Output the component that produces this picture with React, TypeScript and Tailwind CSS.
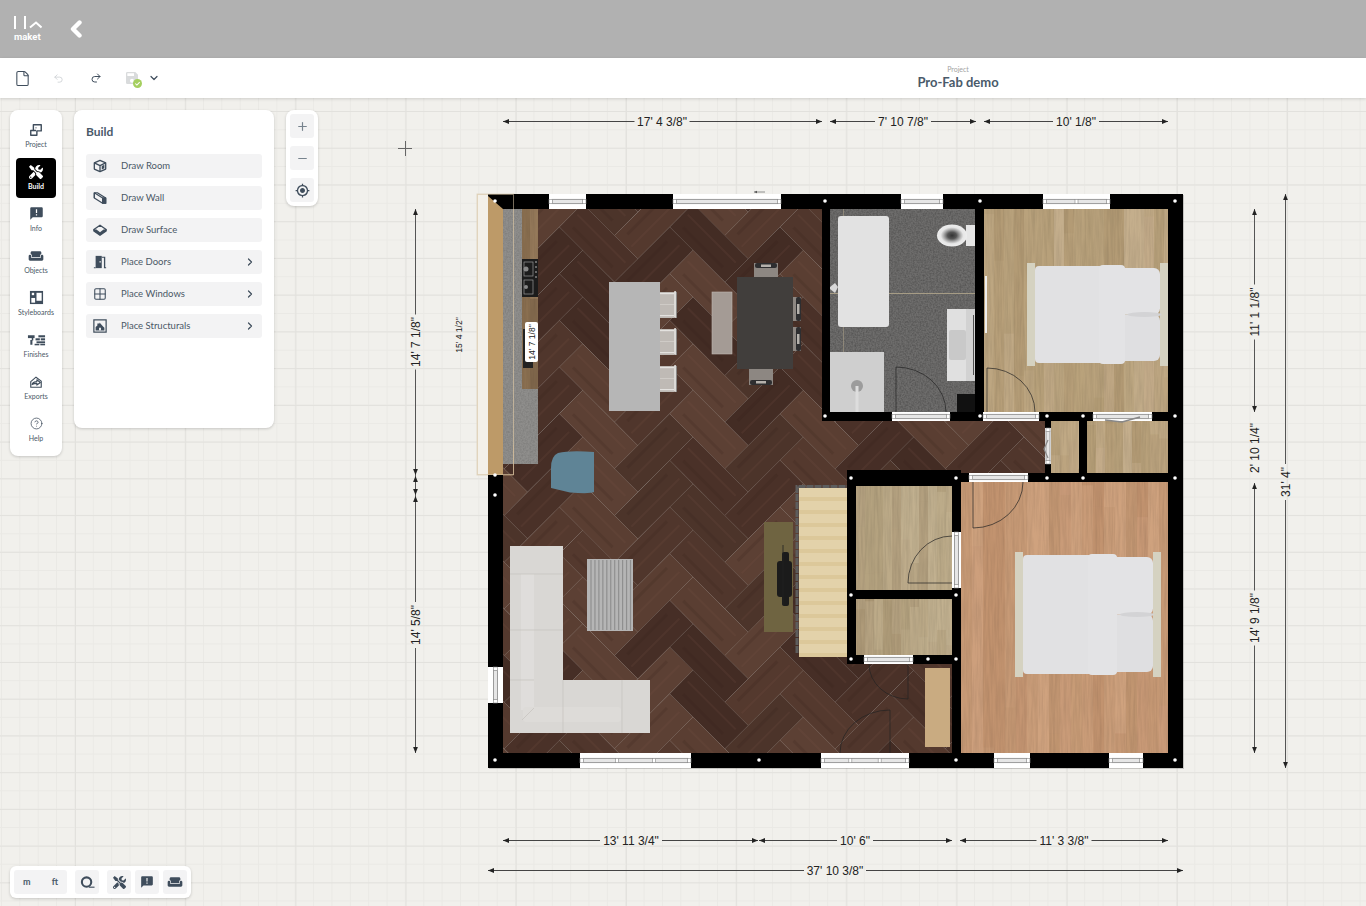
import React from "react";
import { ChevronRight, ChevronDown, Undo2, Redo2, File, Plus, Minus, CircleHelp, Grid2x2 } from "lucide-react";
import { FaTools } from "react-icons/fa";
import { MdWeekend, MdAnnouncement, MdMyLocation, MdSave } from "react-icons/md";

const ink = "#3f4d5c";

function rng(seed: number) {
  let s = seed;
  return () => {
    s = (s * 16807) % 2147483647;
    return s / 2147483647;
  };
}

const W = 33;
const L = 78;
const OX = 693;
const OY = 577;

function Herringbone() {
  const r = rng(4217);
  const pal = ["#4c342a", "#54392e", "#4a3128", "#5a3e32", "#462e26", "#5c4034", "#50362c", "#432c24"];
  const rot = (x: number, y: number) => [OX + (x - y) / Math.SQRT2, OY + (x + y) / Math.SQRT2];
  const poly = (pts: number[][]) => pts.map((p) => rot(p[0], p[1]).map((n) => n.toFixed(1)).join(",")).join(" ");
  const items: React.ReactNode[] = [];
  for (let j = -7; j <= 7; j++) {
    for (let i = -20; i <= 20; i++) {
      const ox = i * W + j * L;
      const oy = i * W - j * L;
      const c = rot(ox, oy);
      if (c[0] < 300 || c[0] > 1300 || c[1] < 60 || c[1] > 900) continue;
      const h = [[ox, oy], [ox + L, oy], [ox + L, oy + W], [ox, oy + W]];
      const v = [[ox + L, oy + W - L], [ox + L + W, oy + W - L], [ox + L + W, oy + W], [ox + L, oy + W]];
      const shapes = [h, v];
      shapes.forEach((sh, k) => {
        const col = pal[Math.floor(r() * pal.length)];
        items.push(<polygon key={`${i}-${j}-${k}`} points={poly(sh)} fill={col} />);
        const a = k === 0 ? [[ox + 4, oy + W * 0.35], [ox + L - 6, oy + W * 0.35]] : [[ox + L + W * 0.6, oy + W - L + 6], [ox + L + W * 0.6, oy + W - 4]];
        const b = k === 0 ? [[ox + 10, oy + W * 0.72], [ox + L - 12, oy + W * 0.72]] : [[ox + L + W * 0.25, oy + W - L + 12], [ox + L + W * 0.25, oy + W - 10]];
        [a, b].forEach((ln, m) => {
          const p1 = rot(ln[0][0], ln[0][1]);
          const p2 = rot(ln[1][0], ln[1][1]);
          items.push(<line key={`${i}-${j}-${k}-${m}`} x1={p1[0]} y1={p1[1]} x2={p2[0]} y2={p2[1]} stroke={m ? "#2f1e18" : "#7a5a4b"} strokeOpacity={0.16} strokeWidth={m ? 3 : 2} />);
        });
      });
    }
  }
  return <g clipPath="url(#planClip)">{items}</g>;
}

function Planks({ x, y, w, h, colors, seed, pw = 9, id }: { x: number; y: number; w: number; h: number; colors: string[]; seed: number; pw?: number; id: string }) {
  const r = rng(seed);
  const bars: React.ReactNode[] = [];
  for (let px = x, i = 0; px < x + w; px += pw, i++) {
    const nw = Math.min(pw, x + w - px);
    bars.push(<rect key={`a${i}`} x={px} y={y} width={nw} height={h} fill={colors[Math.floor(r() * colors.length)]} />);
    const split = y + r() * h;
    bars.push(<rect key={`b${i}`} x={px} y={split} width={nw} height={y + h - split} fill={colors[Math.floor(r() * colors.length)]} opacity={0.6} />);
  }
  return (
    <g>
      {bars}
      <rect x={x} y={y} width={w} height={h} filter="url(#grain)" opacity={0.09} fill="#000" data-id={id} />
    </g>
  );
}

function HWin({ x1, x2, y, h = 15, split = 0 }: { x1: number; x2: number; y: number; h?: number; split?: number }) {
  const m = y + h / 2;
  const cuts = [];
  for (let i = 1; i <= split; i++) cuts.push(x1 + ((x2 - x1) * i) / (split + 1));
  return (
    <g>
      <rect x={x1} y={y} width={x2 - x1} height={h} fill="#fff" />
      <rect x={x1 + 3} y={m - 2.2} width={x2 - x1 - 6} height={4.4} fill="#e6e6e6" stroke="#777" strokeWidth={0.7} />
      <rect x={x1} y={m - 2.2} width={3.5} height={4.4} fill="#fff" stroke="#888" strokeWidth={0.6} />
      <rect x={x2 - 3.5} y={m - 2.2} width={3.5} height={4.4} fill="#fff" stroke="#888" strokeWidth={0.6} />
      {cuts.map((c) => (
        <rect key={c} x={c - 1.5} y={m - 2.2} width={3} height={4.4} fill="#fff" stroke="#888" strokeWidth={0.6} />
      ))}
    </g>
  );
}

function VWin({ y1, y2, x, w }: { y1: number; y2: number; x: number; w: number }) {
  const m = x + w / 2;
  return (
    <g>
      <rect x={x} y={y1} width={w} height={y2 - y1} fill="#fff" />
      <rect x={m - 2} y={y1 + 3} width={4} height={y2 - y1 - 6} fill="#e6e6e6" stroke="#777" strokeWidth={0.7} />
      <rect x={m - 2} y={y1} width={4} height={3.5} fill="#fff" stroke="#888" strokeWidth={0.6} />
      <rect x={m - 2} y={y2 - 3.5} width={4} height={3.5} fill="#fff" stroke="#888" strokeWidth={0.6} />
    </g>
  );
}

function Bed({ x, y, w, h, fold, foldEnd, pillow }: { x: number; y: number; w: number; h: number; fold: number; foldEnd: number; pillow: number }) {
  const my = y + h / 2;
  const top = y + 3;
  const bottom = y + h - 3;
  return (
    <g>
      <rect x={x} y={y} width={8} height={h} fill="#d5d2c1" />
      <rect x={x + w - 8} y={y} width={8} height={h} fill="#d5d2c1" />
      <rect x={foldEnd - 6} y={top + 2} width={x + w - 8 - foldEnd + 6} height={my - top - 2} rx={6} fill="#e3e3e5" />
      <rect x={foldEnd - 6} y={my} width={x + w - 8 - foldEnd + 6} height={bottom - my - 2} rx={6} fill="#dfdfe1" />
      <ellipse cx={(foldEnd + pillow) / 2 + 2} cy={my} rx={17} ry={2.5} fill="#d3d3d5" />
      <rect x={x + 8} y={top} width={foldEnd - x - 8} height={bottom - top} rx={4} fill="#e1e1e3" />
      <rect x={fold} y={top - 1} width={foldEnd - fold} height={bottom - top + 2} rx={4} fill="#e3e3e5" />
    </g>
  );
}

function Arrow({ x, y, dir }: { x: number; y: number; dir: "l" | "r" | "u" | "d" }) {
  const s = 6;
  const t = 2.4;
  const pts =
    dir === "l" ? `${x},${y} ${x + s},${y - t} ${x + s},${y + t}` :
    dir === "r" ? `${x},${y} ${x - s},${y - t} ${x - s},${y + t}` :
    dir === "u" ? `${x},${y} ${x - t},${y + s} ${x + t},${y + s}` :
    `${x},${y} ${x - t},${y - s} ${x + t},${y - s}`;
  return <polygon points={pts} fill="#222" />;
}

function HDim({ x1, x2, y, cx, label, tw }: { x1: number; x2: number; y: number; cx: number; label: string; tw: number }) {
  return (
    <g>
      <line x1={x1} y1={y + 0.5} x2={cx - tw / 2 - 3} y2={y + 0.5} stroke="#444" strokeWidth={1} />
      <line x1={cx + tw / 2 + 3} y1={y + 0.5} x2={x2} y2={y + 0.5} stroke="#444" strokeWidth={1} />
      <Arrow x={x1} y={y + 0.5} dir="l" />
      <Arrow x={x2} y={y + 0.5} dir="r" />
      <text x={cx} y={y + 4.5} textAnchor="middle" fontSize={12} fill="#222" fontFamily="'Liberation Sans',sans-serif">{label}</text>
    </g>
  );
}

function VDim({ x, y1, y2, cy, label, tw, noLine }: { x: number; y1: number; y2: number; cy: number; label: string; tw: number; noLine?: boolean }) {
  return (
    <g>
      {!noLine && <line x1={x + 0.5} y1={y1} x2={x + 0.5} y2={cy - tw / 2 - 3} stroke="#555" strokeWidth={1} />}
      {!noLine && <line x1={x + 0.5} y1={cy + tw / 2 + 3} x2={x + 0.5} y2={y2} stroke="#555" strokeWidth={1} />}
      {!noLine && <Arrow x={x + 0.5} y={y1} dir="u" />}
      {!noLine && <Arrow x={x + 0.5} y={y2} dir="d" />}
      <text transform={`translate(${x + 4.5} ${cy}) rotate(-90)`} textAnchor="middle" fontSize={12} fill="#222" fontFamily="'Liberation Sans',sans-serif">{label}</text>
    </g>
  );
}

function Chair({ x, y, w, h, dir }: { x: number; y: number; w: number; h: number; dir: "u" | "d" | "r" }) {
  const isV = dir === "u" || dir === "d";
  return (
    <g>
      <rect x={x} y={y} width={w} height={h} fill="#8d8782" />
      {dir === "u" && <rect x={x + 1} y={y} width={w - 2} height={5} rx={2} fill="#2e2e30" />}
      {dir === "d" && <rect x={x + 1} y={y + h - 5} width={w - 2} height={5} rx={2} fill="#2e2e30" />}
      {dir === "r" && <rect x={x + w - 5} y={y} width={5} height={h} rx={2} fill="#2e2e30" />}
      {isV ? (
        <rect x={x + w / 2 - 5} y={dir === "u" ? y + 1.5 : y + h - 4} width={10} height={2.5} fill="#b5b1ac" />
      ) : (
        <rect x={x + w - 4} y={y + h / 2 - 5} width={2.5} height={10} fill="#b5b1ac" />
      )}
    </g>
  );
}

function Stool({ y }: { y: number }) {
  return (
    <g>
      <rect x={660} y={y} width={14} height={26} fill="#bfbab5" />
      <rect x={660} y={y + 1} width={16} height={1.2} fill="#e4e2df" />
      <rect x={660} y={y + 23} width={16} height={1.2} fill="#e4e2df" />
      <rect x={660} y={y + 12} width={14} height={1} fill="#cfcbc6" />
      <rect x={674} y={y - 1} width={2.2} height={27} rx={1} fill="#dcdad7" />
      <rect x={676} y={y} width={1} height={26} fill="#8a8886" />
    </g>
  );
}

function Plan() {
  const dots: [number, number][] = [
    [495, 201], [495, 475], [495, 495], [495, 760], [759, 760], [825, 201], [980, 201], [1175, 201], [825, 416], [980, 416],
    [1047, 416], [1083, 416], [1175, 416], [851, 478], [956, 478], [1047, 478], [1083, 478], [1175, 478], [851, 595], [956, 595],
    [851, 659], [928, 659], [956, 659], [956, 760], [1175, 760],
  ];
  const treads: number[] = [];
  for (let i = 0; i < 13; i++) treads.push(488 + i * 13);
  const rugs: number[] = [];
  for (let i = 0; i < 11; i++) rugs.push(591 + i * 3.95);
  const tan = ["#b9a27c", "#c0a985", "#b39b75", "#c4ae8c", "#b7a07a"];
  const tan2 = ["#b3a07f", "#bcaa88", "#ab9775", "#c1b08f", "#b4a27f"];
  const orange = ["#c79a76", "#cfa27e", "#c2936f", "#cc9d7b", "#c29672"];
  return (
    <svg className="absolute left-0 top-0 w-[1366px] h-[808px]" viewBox="0 98 1366 808">
      <defs>
        <clipPath id="planClip">
          <rect x={488} y={194} width={695} height={574} />
        </clipPath>
        <filter id="grain" x="0" y="0" width="100%" height="100%">
          <feTurbulence type="fractalNoise" baseFrequency="0.45 0.025" numOctaves="3" seed="7" />
          <feColorMatrix values="0 0 0 0 0  0 0 0 0 0  0 0 0 0 0  1.6 0 0 0 -0.5" />
        </filter>
        <filter id="speck" x="0" y="0" width="100%" height="100%">
          <feTurbulence type="fractalNoise" baseFrequency="0.6" numOctaves="3" seed="3" />
          <feColorMatrix values="0 0 0 0 0  0 0 0 0 0  0 0 0 0 0  2 0 0 0 -0.65" />
        </filter>
        <radialGradient id="bowl">
          <stop offset="0" stopColor="#333" />
          <stop offset="0.3" stopColor="#555" />
          <stop offset="0.55" stopColor="#aaa" />
          <stop offset="0.75" stopColor="#e6e6e6" />
          <stop offset="1" stopColor="#eee" />
        </radialGradient>
      </defs>

      <HDim x1={503} x2={822} y={121} cx={662} label={"17' 4 3/8\""} tw={49} />
      <HDim x1={830} x2={976} y={121} cx={903} label={"7' 10 7/8\""} tw={50} />
      <HDim x1={984} x2={1168} y={121} cx={1076} label={"10' 1/8\""} tw={40} />
      <HDim x1={503} x2={758} y={840} cx={631} label={"13' 11 3/4\""} tw={56} />
      <HDim x1={759} x2={952} y={840} cx={855} label={"10' 6\""} tw={30} />
      <HDim x1={960} x2={1168} y={840} cx={1064} label={"11' 3 3/8\""} tw={49} />
      <HDim x1={488} x2={1183} y={870} cx={835} label={"37' 10 3/8\""} tw={56} />
      <VDim x={415} y1={209} y2={475} cy={342} label={"14' 7 1/8\""} tw={49} />
      <VDim x={415} y1={496} y2={753} cy={625} label={"14' 5/8\""} tw={40} />
      <line x1={415.5} y1={475} x2={415.5} y2={496} stroke="#555" strokeWidth={1} />
      <Arrow x={415.5} y={476} dir="u" />
      <Arrow x={415.5} y={495} dir="d" />
      <VDim x={1254} y1={209} y2={412} cy={312} label={"11' 1 1/8\""} tw={49} />
      <VDim x={1254} y1={412} y2={472} cy={448} label={"2' 10 1/4\""} tw={50} noLine />
      <VDim x={1254} y1={483} y2={753} cy={618} label={"14' 9 1/8\""} tw={49} />
      <VDim x={1285} y1={194} y2={768} cy={482} label={"31' 4\""} tw={30} />
      <text transform="translate(462 335) rotate(-90)" textAnchor="middle" fontSize={8.5} fill="#222" fontFamily="'Liberation Sans',sans-serif">{"15' 4 1/2\""}</text>

      <path d="M398 148.5H412M405.500 141V156" stroke="#666" strokeWidth={1} />

      <rect x={489} y={195} width={695} height={574} fill="#000" opacity={0.18} />
      <rect x={477} y={194} width={37} height={281} fill="#f3f0e9" stroke="#e2d8c5" strokeWidth={1} />

      <Herringbone />

      <rect x={830} y={209} width={145} height={203} fill="#6e6d6c" />
      <rect x={830} y={209} width={145} height={203} filter="url(#speck)" opacity={0.2} />
      <rect x={830} y={293} width={145} height={1} fill="#a69c85" />
      <rect x={843} y={209} width={1} height={143} fill="#a69c85" opacity={0.6} />
      <Planks x={984} y={209} w={184} h={203} colors={tan} seed={23} pw={10} id="c" />
      <Planks x={1051} y={421} w={28} h={52} colors={tan} seed={5} id="d" />
      <Planks x={1087} y={421} w={81} h={52} colors={tan} seed={31} id="e" />
      <Planks x={856} y={486} w={96} h={104} colors={tan2} seed={41} id="f" />
      <Planks x={856} y={599} w={96} h={56} colors={tan2} seed={47} id="g" />
      <Planks x={961} y={482} w={207} h={271} colors={orange} seed={53} pw={11} id="h" />

      {/* kitchen */}
      <rect x={503} y={209} width={19} height={255} fill="#8f8e8c" />
      <rect x={503} y={209} width={19} height={255} filter="url(#speck)" opacity={0.1} />
      <Planks x={522} y={209} w={16} h={180} colors={["#8a6f50", "#7a6146", "#95795a"]} seed={61} pw={8} id="i" />
      <rect x={522} y={389} width={16} height={75} fill="#8f8e8c" />
      <rect x={522} y={389} width={16} height={75} filter="url(#speck)" opacity={0.1} />
      <rect x={522} y={259} width={16} height={38} fill="#1c1c1c" />
      <rect x={524} y={262} width={9} height={14} fill="none" stroke="#999" strokeWidth={0.7} />
      <rect x={524} y={280} width={9} height={14} fill="none" stroke="#999" strokeWidth={0.7} />
      <circle cx={526} cy={269} r={2.5} fill="#888" />
      <circle cx={526} cy={287} r={2} fill="#888" />
      <circle cx={536} cy={262} r={0.8} fill="#ccc" />
      <circle cx={536} cy={267} r={0.8} fill="#ccc" />
      <circle cx={536} cy={272} r={0.8} fill="#ccc" />
      <circle cx={536} cy={277} r={0.8} fill="#ccc" />
      <rect x={523} y={329} width={10} height={39} fill="#222" />
      <rect x={525} y={322} width={13} height={40} rx={2} fill="#fff" />
      <text transform="translate(534.500 342) rotate(-90)" textAnchor="middle" fontSize={8.500} fill="#222" fontFamily="'Liberation Sans',sans-serif">{"14' 7 1/8\""}</text>
      <path d="M513.500 445V475H503" stroke="#c9a880" strokeWidth={1} fill="none" opacity={0.7} />
      <line x1={513.500} y1={209} x2={513.500} y2={464} stroke="#bda98c" strokeWidth={0.8} opacity={0.6} />

      {/* island and dining */}
      <rect x={609} y={282} width={51} height={129} fill="#b6b6b6" />
      <Stool y={292} />
      <Stool y={329} />
      <Stool y={366} />
      <rect x={712} y={292} width={20} height={62} fill="#a49b95" stroke="#c0b9b3" strokeWidth={0.6} />
      <Chair x={754} y={263} w={24} h={14} dir="u" />
      <Chair x={749} y={369} w={24} h={16} dir="d" />
      <Chair x={793} y={297} w={8} h={24} dir="r" />
      <Chair x={793} y={327} w={8} h={24} dir="r" />
      <rect x={737} y={277} width={56} height={92} fill="#413e3c" />

      {/* blue chair */}
      <path d="M558 453Q551 456 551 468V488L570 492.500Q590 494 594 492V452Q570 450 558 453Z" fill="#5f8496" />

      {/* sofa */}
      <path d="M510 546H563V680H650V733H510Z" fill="#d9d7d4" />
      <rect x={521} y={574} width={13} height={136} fill="#dfdddb" />
      <rect x={523} y={707} width={98} height={15} rx={3} fill="#dddbd8" />
      <path d="M510 574H563M510 630H563M510 680H534M563 680V733M622 680V733M534 708L522 720" stroke="#c4c1bd" strokeWidth={0.7} fill="none" />

      {/* rug */}
      <rect x={587} y={559} width={46} height={72} fill="#b5b5b5" />
      {rugs.map((x) => (
        <line key={x} x1={x} y1={560} x2={x} y2={630} stroke="#8f8f8f" strokeWidth={1.2} />
      ))}

      {/* tv */}
      <rect x={764} y={522} width={29} height={110} fill="#6f6441" />
      <rect x={777} y={561} width={15} height={36} rx={3} fill="#1b1b1b" />
      <rect x={782} y={552} width={7} height={54} rx={2} fill="#1b1b1b" />
      <line x1={783} y1={545} x2={783} y2={605} stroke="#222" strokeWidth={0.8} />

      {/* stairs */}
      <rect x={799} y={488} width={48} height={169} fill="#e3d2aa" />
      {treads.map((y) => (
        <rect key={y} x={799} y={y + 9} width={48} height={4} fill="#dcc89a" />
      ))}
      <path d="M797 653V486.500H847" stroke="#5d5d5d" strokeWidth={3} fill="none" strokeDasharray="7 1" />

      {/* console */}
      <rect x={925} y={668} width={25} height={79} fill="#c9ab81" />

      {/* beds */}
      <Bed x={1027} y={263} w={141} h={103} fold={1099} foldEnd={1125} pillow={1160} />
      <Bed x={1015} y={552} w={146} h={125} fold={1088} foldEnd={1117} pillow={1153} />

      {/* bath */}
      <rect x={838} y={216} width={51} height={111} rx={3} fill="#e2e2e2" />
      <path d="M830 287L835 283V293L830 289Z M835 283L838 287L835 293Z" fill="#d8d8d8" />
      <rect x={830} y={352} width={54} height={60} fill="#cfcfcf" />
      <circle cx={857} cy={386} r={6} fill="#9c9c9c" />
      <rect x={855.500} y={386} width={3} height={26} fill="#ddd" />
      <rect x={947} y={309} width={28} height={72} fill="#e0e0e0" />
      <rect x={949} y={330} width={17} height={30} rx={2} fill="#c9c9c9" />
      <line x1={973.500} y1={315} x2={973.500} y2={375} stroke="#555" strokeWidth={1} />
      <rect x={966} y={309} width={9} height={72} fill="#000" opacity={0.06} />
      <rect x={957} y={394} width={18} height={18} fill="#111" />
      <rect x={966} y={225} width={9} height={21} fill="#e6e6e6" />
      <ellipse cx={952} cy={235.500} rx={15} ry={11} fill="url(#bowl)" />
      <rect x={985} y={276} width={2} height={57} fill="#eee" />

      {/* walls */}
      <g fill="#000">
        <rect x={488} y={194} width={695} height={15} />
        <rect x={1168} y={194} width={15} height={574} />
        <rect x={488} y={753} width={695} height={15} />
        <rect x={488} y={475} width={15} height={293} />
        <rect x={822} y={194} width={8} height={227} />
        <rect x={975} y={194} width={9} height={227} />
        <rect x={822} y={412} width={223} height={9} />
        <rect x={1045} y={412} width={123} height={9} />
        <rect x={1045} y={412} width={6} height={70} />
        <rect x={1079} y={412} width={8} height={70} />
        <rect x={956} y={473} width={227} height={9} />
        <rect x={847} y={470} width={109} height={16} />
        <rect x={847} y={470} width={9} height={194} />
        <rect x={952} y={470} width={9} height={298} />
        <rect x={847} y={590} width={114} height={9} />
        <rect x={847} y={655} width={114} height={9} />
      </g>
      <polygon points="488,196 503,209 503,475 488,475" fill="#bd9a68" />
      <rect x={477.500} y={194.500} width={36} height={280} fill="none" stroke="#d8c7a8" strokeWidth={1} opacity={0.55} />

      <HWin x1={549} x2={586} y={194} />
      <HWin x1={673} x2={781} y={194} />
      <HWin x1={901} x2={943} y={194} />
      <HWin x1={1043} x2={1110} y={194} split={1} />
      <HWin x1={892} x2={950} y={412} h={9} />
      <HWin x1={983} x2={1039} y={412} h={9} />
      <HWin x1={1093} x2={1152} y={412} h={9} />
      <HWin x1={969} x2={1028} y={473} h={9} />
      <HWin x1={864} x2={913} y={655} h={9} />
      <HWin x1={580} x2={691} y={753} split={2} />
      <HWin x1={821} x2={909} y={753} split={2} />
      <HWin x1={994} x2={1030} y={753} />
      <HWin x1={1109} x2={1143} y={753} />
      <VWin x={488} w={15} y1={667} y2={703} />
      <VWin x={952} w={9} y1={532} y2={588} />
      <VWin x={1045} w={6} y1={428} y2={464} />

      <g stroke="#222" strokeWidth={0.7} fill="none">
        <path d="M896 412V367A50 45 0 0 1 946 412" />
        <path d="M987 412V368A48 44 0 0 1 1035 412" />
        <path d="M973 482V528A50 46 0 0 0 1023 482" />
        <path d="M952 583H908A44 47 0 0 1 952 536" />
        <path d="M908 664V699A39 35 0 0 1 869 664" />
        <path d="M890 753V710A50 43 0 0 0 840 753" />
        <path d="M1105 420L1122 422L1140 417" stroke="#888" strokeWidth={1.500} />
        <path d="M1048 440L1044 449L1048 458" stroke="#888" strokeWidth={1.200} />
      </g>

      {dots.map(([x, y]) => (
        <circle key={`${x}-${y}`} cx={x} cy={y} r={1.800} fill="#fff" />
      ))}
      <path d="M754 192H765" stroke="#777" strokeWidth={0.8} />
      <polygon points="754,192 757,190.700 757,193.300" fill="#555" />
    </svg>
  );
}

function Ic({ children }: { children: React.ReactNode }) {
  return (
    <svg viewBox="0 0 16 16" width={14} height={14} fill="none" stroke={ink} strokeWidth={1.600} strokeLinejoin="round">
      {children}
    </svg>
  );
}

const ProjectIcon = () => (
  <Ic>
    <path d="M5 2H14V9H9V14H2V8.500H5Z" />
    <path d="M5 8.500H8M8 5V6" />
  </Ic>
);
const StyleIcon = () => (
  <svg viewBox="0 0 16 16" width={15} height={15}>
    <rect x={1} y={1} width={14} height={14} fill={ink} />
    <rect x={2.500} y={8.500} width={4} height={5} fill="#fff" />
    <rect x={8} y={3} width={5.500} height={8.500} fill="#fff" />
    <rect x={3} y={3} width={2.500} height={2.500} fill="#fff" />
  </svg>
);
const FinishIcon = () => (
  <svg viewBox="0 0 20 12" width={19} height={12} fill={ink}>
    <rect x={1} y={1} width={7} height={3} />
    <rect x={5} y={3.500} width={1.600} height={3} />
    <rect x={3.500} y={6} width={2.200} height={5} />
    <rect x={12} y={1} width={7} height={2.200} />
    <rect x={9} y={4.200} width={4.500} height={2.200} />
    <rect x={14.500} y={4.200} width={4.500} height={2.200} />
    <rect x={10} y={7.400} width={9} height={2} />
    <rect x={8} y={10} width={5} height={1.600} />
    <rect x={14} y={10} width={5} height={1.600} />
  </svg>
);
const ExportIcon = () => (
  <svg viewBox="0 0 16 16" width={14} height={14} fill="none" stroke={ink} strokeWidth={1.300} strokeLinejoin="round">
    <path d="M2 7.500L8 2.500L14 7L14 14H2Z" />
    <path d="M3.500 11C4 8.500 6.500 7.500 9 7.500V5.500L13 8.500L9 11.500V9.500C7 9.500 5 10 3.500 11Z" fill="#fff" />
  </svg>
);
const RoomIcon = () => (
  <svg viewBox="0 0 16 16" width={14} height={14} fill="none" stroke={ink} strokeWidth={1.500} strokeLinejoin="round">
    <path d="M8 1.500L14.500 4.500V11.500L8 14.500L1.500 11.500V4.500Z" />
    <path d="M1.500 4.500L8 7.500L14.500 4.500M8 7.500V14.500" />
    <path d="M10 8L13 6.500V10.500L10 12Z" fill={ink} stroke="none" />
  </svg>
);
const WallIcon = () => (
  <svg viewBox="0 0 16 16" width={14} height={14} fill="none" stroke={ink} strokeWidth={1.400} strokeLinejoin="round">
    <path d="M1.500 2H5L14.500 8V14H11L1.500 8Z" />
    <path d="M1.500 2V8M11 8V14M1.500 2L11 8H14.500" />
    <path d="M11 8L14.500 8V14H11Z" fill={ink} />
  </svg>
);
const SurfaceIcon = () => (
  <svg viewBox="0 0 16 16" width={14} height={14} fill="none" stroke={ink} strokeWidth={1.500} strokeLinejoin="round">
    <path d="M8 2.500L15 7.500L8 12.500L1 7.500Z" />
    <path d="M1 7.500V9L8 14L15 9V7.500" fill={ink} />
    <path d="M8 4.500L12 7.500L8 10.500L4 7.500Z" fill="#f3f3f4" stroke="none" />
  </svg>
);
const DoorIcon = () => (
  <svg viewBox="0 0 16 16" width={14} height={14} fill={ink}>
    <path d="M3 1H10V15H3Z" />
    <path d="M10 2H14V14H15V15H1V14H3V15H12.500V3H10Z" />
    <rect x={7.500} y={7} width={1.300} height={1.600} fill="#fff" />
  </svg>
);
const StructIcon = () => (
  <svg viewBox="0 0 16 16" width={14} height={14} fill="none">
    <rect x={1} y={1} width={14} height={14} stroke={ink} strokeWidth={1.400} />
    <path d="M3 13V9L5 7.500V5H7.500V4L11 8L13 10V13Z" fill={ink} />
    <rect x={7} y={10} width={2} height={3} fill="#fff" />
  </svg>
);
const MeasureIcon = () => (
  <svg viewBox="0 0 16 16" width={15} height={15} fill="none" stroke={ink} strokeWidth={2.200}>
    <circle cx={7} cy={7.500} r={5} />
    <path d="M9.500 13H15.500" strokeWidth={1.200} />
  </svg>
);

function NavItem({ label, icon, active }: { label: string; icon: React.ReactNode; active?: boolean }) {
  return (
    <div className={`relative flex h-10 flex-col items-center rounded-[4px] ${active ? "bg-black text-white" : "text-[#4a5866]"}`}>
      <div className="mt-[6px] flex h-[15px] items-center justify-center">{icon}</div>
      <div className={`mt-[3px] text-[7px] leading-[8px] ${active ? "font-bold" : ""}`}>{label}</div>
    </div>
  );
}

function MenuItem({ label, icon, more }: { label: string; icon: React.ReactNode; more?: boolean }) {
  return (
    <div className="flex h-6 items-center rounded-[3px] bg-[#f3f3f4] pl-[7px] pr-[6px] text-[9.5px] text-[#4a5866]">
      <div className="flex w-[14px] items-center justify-center">{icon}</div>
      <span className="ml-[14px]">{label}</span>
      {more && <ChevronRight className="ml-auto" size={12} color={ink} strokeWidth={2.400} />}
    </div>
  );
}

function ZoomBtn({ children }: { children: React.ReactNode }) {
  return <div className="flex h-6 w-6 items-center justify-center rounded-[3px] bg-[#f3f3f4]">{children}</div>;
}

function BarBtn({ children }: { children: React.ReactNode }) {
  return <div className="flex h-6 w-6 items-center justify-center rounded-[3px] bg-[#f3f3f4]">{children}</div>;
}

export default function App() {
  return (
    <div className="flex h-[906px] w-[1366px] flex-col overflow-hidden font-['Lato',sans-serif]">
      <header className="flex h-[58px] shrink-0 items-center bg-[#b1b1b1] pl-[14px]">
        <div className="flex w-[28px] flex-col">
          <svg viewBox="0 0 28 14" width={28} height={14} fill="#fff">
            <rect x={0} y={0} width={2} height={13} />
            <rect x={10} y={0} width={2} height={13} />
            <path d="M16 11.500L22 6.500L27.500 11.500" fill="none" stroke="#fff" strokeWidth={2} />
          </svg>
          <span className="mt-[2px] font-['Roboto',sans-serif] text-[9.5px] font-bold leading-[10px] text-white">maket</span>
        </div>
        <svg className="ml-[28px]" viewBox="0 0 12 18" width={12} height={18}>
          <path d="M9.500 2.500L3 9L9.500 15.500" fill="none" stroke="#fff" strokeWidth={4.400} strokeLinecap="round" strokeLinejoin="round" />
        </svg>
      </header>

      <div className="relative z-10 flex h-10 shrink-0 items-center bg-white pl-[14px] shadow-[0_1px_3px_rgba(0,0,0,0.15)]">
        <File size={17} color={ink} strokeWidth={1.500} />
        <Undo2 className="ml-[22px]" size={11} color="#c5c9cd" strokeWidth={1.600} />
        <Redo2 className="ml-[26px]" size={12} color={ink} strokeWidth={2} />
        <div className="relative ml-[22px] h-[16px] w-[16px]">
          <MdSave size={16} color="#d9dbdc" />
          <div className="absolute bottom-[-2px] right-[-2px] flex h-[9px] w-[9px] items-center justify-center rounded-full bg-[#a5cf5f]">
            <svg viewBox="0 0 8 8" width={7} height={7}>
              <path d="M1.500 4L3.300 5.800L6.500 2.500" fill="none" stroke="#fff" strokeWidth={1.200} />
            </svg>
          </div>
        </div>
        <ChevronDown className="ml-[8px]" size={12} color={ink} strokeWidth={2.400} />
        <div className="ml-[757px] flex w-[82px] flex-col items-center">
          <span className="relative top-[-1px] text-[7px] leading-[9px] text-[#a3a3a3]">Project</span>
          <span className="text-[13px] font-bold leading-[15px] text-[#4a5a6a]">Pro-Fab demo</span>
        </div>
      </div>

      <main className="relative flex-1 bg-[#f1f0ec] [background-image:linear-gradient(#e2e1dd_1px,transparent_1px),linear-gradient(90deg,#e2e1dd_1px,transparent_1px),linear-gradient(#eae9e5_1px,transparent_1px),linear-gradient(90deg,#eae9e5_1px,transparent_1px)] [background-size:36.74px_36.74px,110.2px_110.2px,18.37px_18.37px,18.37px_18.37px] [background-position:0px_13px,75px_0px,0px_13px,1px_0px]">
        <Plan />

        <div className="absolute left-[10px] top-3 flex items-start gap-3">
          <nav className="flex w-[52px] flex-col gap-[2px] rounded-[8px] bg-white p-[6px] shadow-[0_1px_3px_rgba(0,0,0,0.18)]">
            <NavItem label="Project" icon={<ProjectIcon />} />
            <NavItem label="Build" active icon={<FaTools size={14} color="#fff" />} />
            <NavItem label="Info" icon={<MdAnnouncement size={15} color={ink} />} />
            <NavItem label="Objects" icon={<MdWeekend size={16} color={ink} />} />
            <NavItem label="Styleboards" icon={<StyleIcon />} />
            <NavItem label="Finishes" icon={<FinishIcon />} />
            <NavItem label="Exports" icon={<ExportIcon />} />
            <NavItem label="Help" icon={<CircleHelp size={13} color={ink} strokeWidth={1.400} />} />
          </nav>

          <section className="h-[318px] w-[200px] rounded-[8px] bg-white p-3 shadow-[0_1px_3px_rgba(0,0,0,0.18)]">
            <h2 className="mb-3 flex h-5 items-center text-[12px] font-bold text-[#4a5a6a]">Build</h2>
            <div className="flex flex-col gap-2">
              <MenuItem label="Draw Room" icon={<RoomIcon />} />
              <MenuItem label="Draw Wall" icon={<WallIcon />} />
              <MenuItem label="Draw Surface" icon={<SurfaceIcon />} />
              <MenuItem label="Place Doors" more icon={<DoorIcon />} />
              <MenuItem label="Place Windows" more icon={<Grid2x2 size={14} color={ink} strokeWidth={1.800} />} />
              <MenuItem label="Place Structurals" more icon={<StructIcon />} />
            </div>
          </section>

          <div className="flex w-8 flex-col items-center gap-2 rounded-[8px] bg-white py-1 shadow-[0_1px_3px_rgba(0,0,0,0.18)]">
            <ZoomBtn><Plus size={13} color="#77838e" strokeWidth={2.200} /></ZoomBtn>
            <ZoomBtn><Minus size={13} color="#77838e" strokeWidth={2.200} /></ZoomBtn>
            <ZoomBtn><MdMyLocation size={15} color={ink} /></ZoomBtn>
          </div>
        </div>

        <div className="absolute bottom-2 left-[10px] flex h-8 w-[181px] items-center rounded-[6px] bg-white p-1 shadow-[0_1px_3px_rgba(0,0,0,0.18)]">
          <div className="flex h-6 w-[53px] items-center justify-between rounded-[3px] bg-[#f3f3f4] pl-[9px] pr-[9px] text-[9px] font-bold text-[#4a5a6a]">
            <span>m</span>
            <span>ft</span>
          </div>
          <div className="ml-2"><BarBtn><MeasureIcon /></BarBtn></div>
          <div className="ml-2"><BarBtn><FaTools size={13} color={ink} /></BarBtn></div>
          <div className="ml-1"><BarBtn><MdAnnouncement size={14} color={ink} /></BarBtn></div>
          <div className="ml-1"><BarBtn><MdWeekend size={16} color={ink} /></BarBtn></div>
        </div>
      </main>
    </div>
  );
}
